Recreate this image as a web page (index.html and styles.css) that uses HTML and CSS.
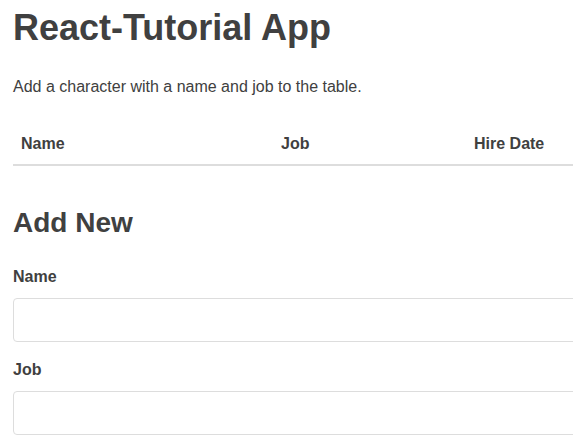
FILE: index.html
```html
<!DOCTYPE html>
<html>
<head>
<meta charset="utf-8">
<link rel="stylesheet" href="styles.css">
</head>
<body>
<div class="container">
  <h1>React-Tutorial App</h1>
  <p class="lead">Add a character with a name and job to the table.</p>
  <table class="chars">
    <colgroup><col class="c1"><col class="c2"><col class="c3"></colgroup>
    <thead>
      <tr><th>Name</th><th>Job</th><th>Hire Date</th></tr>
    </thead>
    <tbody></tbody>
  </table>
  <h2>Add New</h2>
  <form class="form">
    <label for="name">Name</label>
    <input id="name" type="text">
    <label for="job">Job</label>
    <input id="job" type="text">
  </form>
</div>
</body>
</html>
```
FILE: styles.css
```css
html, body { overflow: hidden; }
body {
  margin: 0;
  font-family: "Liberation Sans", Arial, sans-serif;
  color: #404040;
  background: #fff;
}
.container {
  width: 700px;
  padding: 0 13px;
}
h1 {
  font-size: 36px;
  font-weight: bold;
  margin: 8px 0 0;
  line-height: 40px;
}
.lead {
  font-size: 16px;
  margin: 29px 0 0;
  line-height: 20px;
}
.chars {
  width: 100%;
  border-collapse: collapse;
  margin-top: 27px;
  table-layout: fixed;
}
.c1 { width: 260px; }
.c2 { width: 193px; }
.chars th {
  text-align: left;
  font-size: 16px;
  font-weight: bold;
  padding: 11px 8px 11px;
  border-bottom: 2px solid #dddddd;
}
h2 {
  font-size: 28px;
  margin: 40px 0 0;
  line-height: 34px;
}
.form { display: flex; flex-direction: column; }
.form label {
  font-size: 16px;
  font-weight: bold;
  margin-top: 27px;
  line-height: 20px;
}
.form label + input { margin-top: 11px; }
.form input + label { margin-top: 18px; }
.form input {
  height: 44px;
  box-sizing: border-box;
  border: 1px solid #dddddd;
  border-radius: 4px;
  font-size: 16px;
  padding: 0 12px;
}
```
